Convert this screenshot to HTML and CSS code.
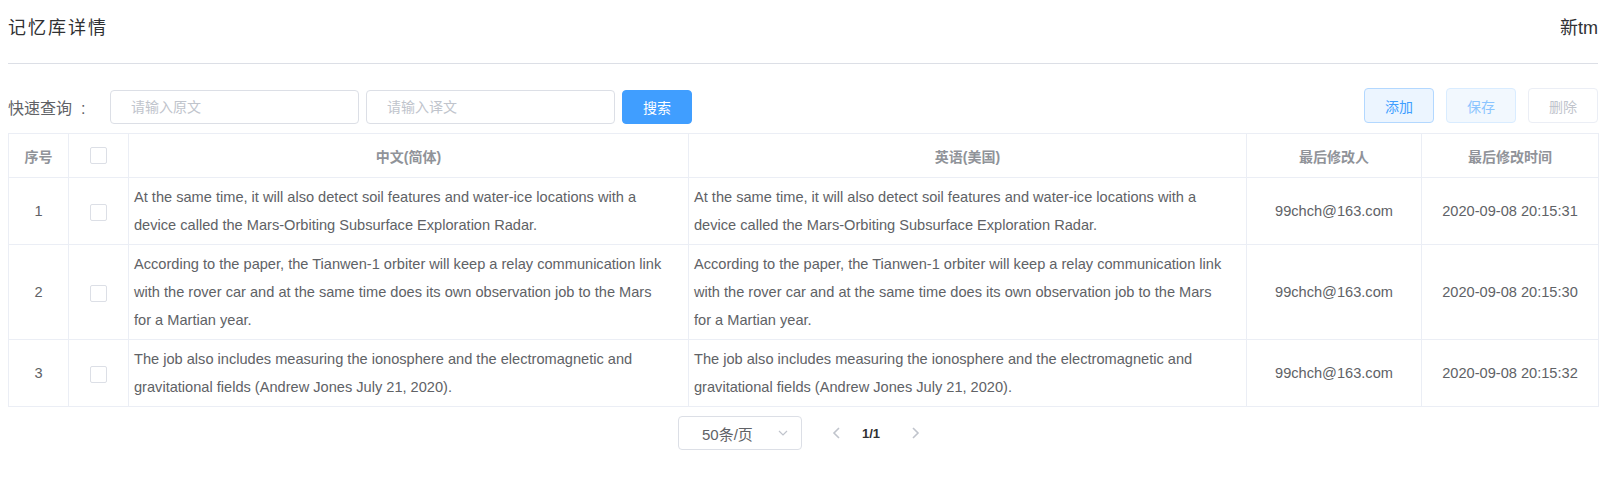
FILE: index.html
```html
<!DOCTYPE html>
<html lang="zh">
<head>
<meta charset="utf-8">
<title>记忆库详情</title>
<link rel="stylesheet" href="styles.css">
</head>
<body>
<div class="page">
  <div class="header">
    <span class="title">记忆库详情</span>
    <span class="name">新tm</span>
  </div>
  <div class="toolbar">
    <div class="search">
      <span class="label">快速查询<span class="colon">:</span></span>
      <input class="input" type="text" placeholder="请输入原文">
      <input class="input" type="text" placeholder="请输入译文">
      <button class="btn btn-primary">搜索</button>
    </div>
    <div class="actions">
      <button class="btn btn-plain">添加</button>
      <button class="btn btn-plain-disabled">保存</button>
      <button class="btn btn-disabled">删除</button>
    </div>
  </div>
  <table class="grid">
    <colgroup>
      <col class="c-idx"><col class="c-chk"><col class="c-src"><col class="c-tgt"><col class="c-user"><col class="c-time">
    </colgroup>
    <thead>
      <tr>
        <th>序号</th>
        <th><span class="checkbox"></span></th>
        <th>中文(简体)</th>
        <th>英语(美国)</th>
        <th>最后修改人</th>
        <th>最后修改时间</th>
      </tr>
    </thead>
    <tbody>
      <tr>
        <td class="center">1</td>
        <td class="center"><span class="checkbox"></span></td>
        <td class="text">At the same time, it will also detect soil features and water-ice locations with a device&nbsp;called the Mars-Orbiting Subsurface Exploration Radar.</td>
        <td class="text">At the same time, it will also detect soil features and water-ice locations with a device&nbsp;called the Mars-Orbiting Subsurface Exploration Radar.</td>
        <td class="center">99chch@163.com</td>
        <td class="center">2020-09-08 20:15:31</td>
      </tr>
      <tr>
        <td class="center">2</td>
        <td class="center"><span class="checkbox"></span></td>
        <td class="text">According to the paper, the Tianwen-1 orbiter will keep a relay communication link with the rover car and at the same time does its own observation job to the Mars for&nbsp;a Martian year.</td>
        <td class="text">According to the paper, the Tianwen-1 orbiter will keep a relay communication link with the rover car and at the same time does its own observation job to the Mars for&nbsp;a Martian year.</td>
        <td class="center">99chch@163.com</td>
        <td class="center">2020-09-08 20:15:30</td>
      </tr>
      <tr>
        <td class="center">3</td>
        <td class="center"><span class="checkbox"></span></td>
        <td class="text">The job also includes measuring the ionosphere and the electromagnetic and gravitational fields (Andrew Jones July 21, 2020).</td>
        <td class="text">The job also includes measuring the ionosphere and the electromagnetic and gravitational fields (Andrew Jones July 21, 2020).</td>
        <td class="center">99chch@163.com</td>
        <td class="center">2020-09-08 20:15:32</td>
      </tr>
    </tbody>
  </table>
  <div class="pager">
    <div class="select">
      <span>50条/页</span>
      <svg class="caret" width="12" height="12" viewBox="0 0 12 12"><polyline points="2,4 6,8 10,4" fill="none" stroke="#c0c4cc" stroke-width="1.2"/></svg>
    </div>
    <span class="arrow prev"><svg width="10" height="14" viewBox="0 0 10 14"><polyline points="7,2 2,7 7,12" fill="none" stroke="#c0c4cc" stroke-width="1.6"/></svg></span>
    <span class="pageinfo">1/1</span>
    <span class="arrow next"><svg width="10" height="14" viewBox="0 0 10 14"><polyline points="3,2 8,7 3,12" fill="none" stroke="#c0c4cc" stroke-width="1.6"/></svg></span>
  </div>
</div>
</body>
</html>
```
FILE: styles.css
```css
* { box-sizing: border-box; }
html, body { margin: 0; padding: 0; background: #fff; }
body {
  font-family: "Liberation Sans", Arial, "Noto Sans CJK SC", sans-serif;
  color: #606266;
  font-size: 14px;
}
.page { padding: 0 2px 0 8px; width: 1600px; }

.header {
  height: 64px;
  display: flex;
  justify-content: space-between;
  align-items: flex-start;
  padding-top: 16px;
  border-bottom: 1px solid #dcdfe6;
}
.title, .name {
  font-size: 18px;
  line-height: 24px;
  color: #303133;
}
.title { letter-spacing: 2px; }

.toolbar {
  display: flex;
  justify-content: space-between;
  align-items: flex-start;
  margin-top: 24px;
  height: 45px;
}
.search { display: flex; align-items: center; margin-top: 2px; }
.label { font-size: 16px; color: #606266; width: 102px; }
.colon { margin-left: 9px; }
.input {
  width: 249px;
  height: 34px;
  border: 1px solid #dcdfe6;
  border-radius: 4px;
  padding: 0 20px;
  font-family: inherit;
  font-size: 14px;
  color: #606266;
  margin-right: 7px;
  outline: none;
}
.input::placeholder { color: #c0c4cc; }
.btn {
  width: 70px;
  height: 34px;
  border-radius: 4px;
  font-family: inherit;
  font-size: 14px;
  padding: 0;
  cursor: pointer;
}
.btn-primary { background: #409eff; border: 1px solid #409eff; color: #fff; }
.actions { display: flex; gap: 12px; }
.actions .btn { height: 35px; }
.btn-plain { background: #ecf5ff; border: 1px solid #b3d8ff; color: #409eff; }
.btn-plain-disabled { background: #f2f8fe; border: 1px solid #d9ecff; color: #8cc5ff; }
.btn-disabled { background: #fff; border: 1px solid #ebeef5; color: #c0c4cc; }

.grid {
  width: 1590px;
  table-layout: fixed;
  border-collapse: collapse;
  border: 1px solid #ebeef5;
}
.c-idx { width: 60px; }
.c-chk { width: 60px; }
.c-src { width: 560px; }
.c-tgt { width: 558px; }
.c-user { width: 175px; }
.c-time { width: 177px; }
.grid th, .grid td { border: 1px solid #ebeef5; }
.grid th {
  height: 44px;
  font-weight: bold;
  color: #909399;
  font-size: 14px;
  text-align: center;
  padding: 0;
}
.grid td {
  padding: 5px 5px;
  line-height: 28px;
  font-size: 14.6px;
  vertical-align: middle;
}
.grid td.center { text-align: center; }
.grid td.text { text-align: left; }
.checkbox {
  display: inline-block;
  width: 17px;
  height: 17px;
  border: 1px solid #dcdfe6;
  border-radius: 2px;
  background: #fff;
  vertical-align: middle;
}

.pager {
  display: flex;
  justify-content: center;
  align-items: center;
  margin-top: 9px;
  padding-left: 2px;
}
.select {
  width: 124px;
  height: 34px;
  border: 1px solid #dcdfe6;
  border-radius: 4px;
  display: flex;
  align-items: center;
  justify-content: space-between;
  padding: 0 12px 0 23px;
  color: #606266;
  font-size: 15px;
}
.caret { display: block; }
.arrow { width: 30px; height: 30px; display: flex; align-items: center; justify-content: center; }
.prev { margin-left: 20px; }
.pageinfo { font-weight: bold; color: #303133; font-size: 13px; margin: 0 20px 0 10px; }
```
